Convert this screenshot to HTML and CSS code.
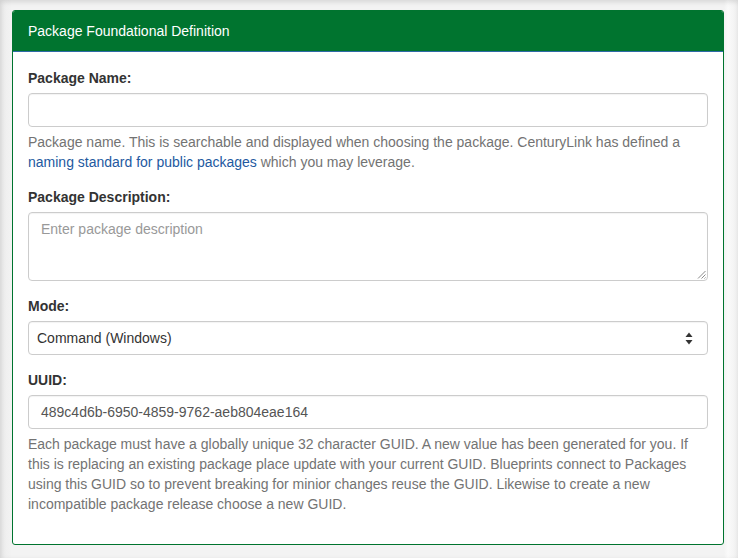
FILE: index.html
```html
<!DOCTYPE html>
<html>
<head>
<meta charset="utf-8">
<link rel="stylesheet" href="styles.css">
</head>
<body>
<div class="page">
  <div class="panel">
    <div class="panel-heading">Package Foundational Definition</div>
    <div class="panel-body">
      <div class="form-group">
        <label class="label">Package Name:</label>
        <div class="input"></div>
        <p class="help">Package name. This is searchable and displayed when choosing the package. CenturyLink has defined a <a class="link" href="#">naming standard for public packages</a> which you may leverage.</p>
      </div>
      <div class="form-group">
        <label class="label">Package Description:</label>
        <div class="textarea">
          <span class="placeholder">Enter package description</span>
          <svg class="grip" width="9" height="9" viewBox="0 0 9 9"><path d="M8.5 1 L1 8.5 M8.5 4.5 L4.5 8.5 M8.5 7.5 L7.5 8.5" stroke="#8a8a8a" stroke-width="1" fill="none"/></svg>
        </div>
      </div>
      <div class="form-group">
        <label class="label">Mode:</label>
        <div class="select">
          <span>Command (Windows)</span>
          <svg class="arrows" width="8" height="13" viewBox="0 0 8 13"><path d="M4 0.5 L7.5 5 L0.5 5 Z" fill="#333"/><path d="M4 12.5 L7.5 8 L0.5 8 Z" fill="#333"/></svg>
        </div>
      </div>
      <div class="form-group">
        <label class="label">UUID:</label>
        <div class="input"><span>489c4d6b-6950-4859-9762-aeb804eae164</span></div>
        <p class="help">Each package must have a globally unique 32 character GUID. A new value has been generated for you. If this is replacing an existing package place update with your current GUID. Blueprints connect to Packages using this GUID so to prevent breaking for minior changes reuse the GUID. Likewise to create a new incompatible package release choose a new GUID.</p>
      </div>
    </div>
  </div>
</div>
</body>
</html>
```
FILE: styles.css
```css
html, body {
  margin: 0;
  padding: 0;
}
body {
  background: #f1f1f1;
  font-family: "Liberation Sans", Arial, sans-serif;
  font-size: 14px;
  line-height: 20px;
  color: #333;
}
.page {
  width: 738px;
  height: 558px;
  box-sizing: border-box;
  padding: 10px 14px 0 12px;
  box-shadow: inset 1px 2px 5px rgba(0,0,0,0.12);
  background: linear-gradient(to right, #ececec 0, #f3f3f3 12px, #f3f3f3 724px, #fafafa 728px, #f0f0f0 738px);
}
.panel {
  background: #fff;
  border: 1px solid #00742f;
  border-radius: 3px;
  overflow: hidden;
}
.panel-heading {
  background: #00742f;
  color: #fff;
  padding: 10px 15px;
  height: 20px;
  border-bottom: 1px solid #2f6aa6;
}
.panel-body {
  padding: 16px 15px 15px;
}
.form-group {
  margin-bottom: 15px;
}
.label {
  display: block;
  font-weight: bold;
  margin-bottom: 5px;
}
.input, .select {
  box-sizing: border-box;
  height: 34px;
  border: 1px solid #ccc;
  border-radius: 4px;
  padding: 6px 12px;
  background: #fff;
  color: #555;
  box-shadow: inset 0 1px 1px rgba(0,0,0,0.05);
}
.select {
  padding-left: 8px;
  display: flex;
  align-items: center;
  justify-content: space-between;
  color: #333;
}
.arrows {
  margin-right: 2px;
}
.textarea {
  position: relative;
  box-sizing: border-box;
  height: 69px;
  border: 1px solid #ccc;
  border-radius: 4px;
  padding: 6px 12px;
  box-shadow: inset 0 1px 1px rgba(0,0,0,0.05);
}
.placeholder {
  color: #999;
}
.grip {
  position: absolute;
  right: 1px;
  bottom: 1px;
}
.help {
  margin: 5px 0 10px;
  color: #737373;
}
.link {
  color: #23599f;
  text-decoration: none;
}
```
